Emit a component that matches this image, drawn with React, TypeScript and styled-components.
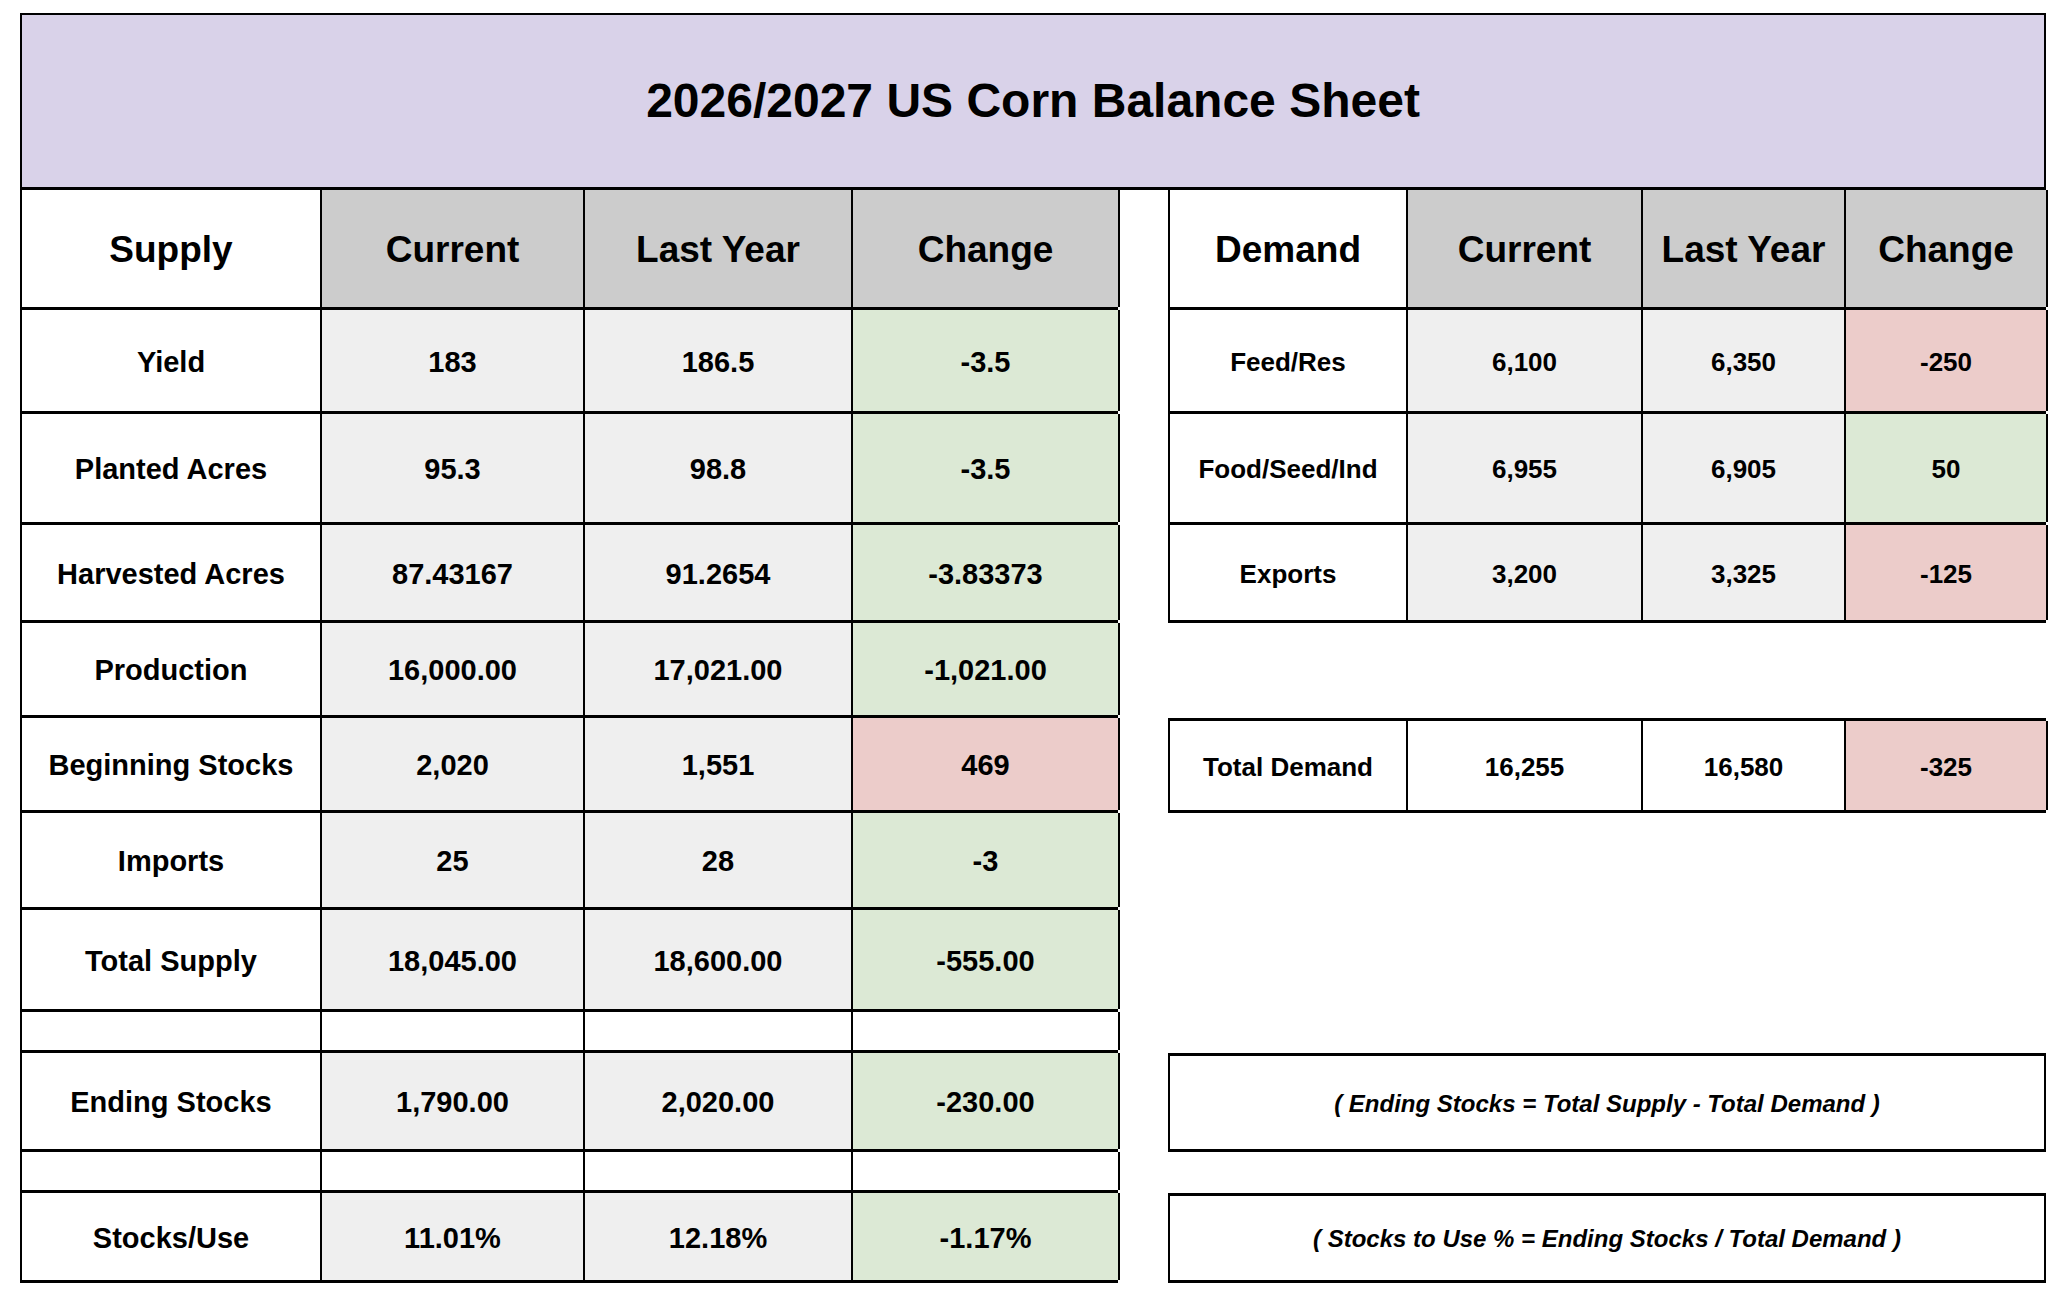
import styled, { createGlobalStyle } from "styled-components"

type Tone = "plain" | "gray" | "head" | "green" | "red"

type SupplyRow = {
  label: string
  current: string
  last: string
  change: string
  tone: Tone
  h: number
}

const tones: Record<Tone, string> = {
  plain: "#ffffff",
  gray: "#efefef",
  head: "#cccccc",
  green: "#dce9d5",
  red: "#ecccca",
}

const LEFT_COLS = "300px 263px 268px 267px"
const RIGHT_COLS = "238px 235px 203px 202px"

const supply: (SupplyRow | null)[] = [
  { label: "Yield", current: "183", last: "186.5", change: "-3.5", tone: "green", h: 104 },
  { label: "Planted Acres", current: "95.3", last: "98.8", change: "-3.5", tone: "green", h: 111 },
  { label: "Harvested Acres", current: "87.43167", last: "91.2654", change: "-3.83373", tone: "green", h: 98 },
  { label: "Production", current: "16,000.00", last: "17,021.00", change: "-1,021.00", tone: "green", h: 95 },
  { label: "Beginning Stocks", current: "2,020", last: "1,551", change: "469", tone: "red", h: 95 },
  { label: "Imports", current: "25", last: "28", change: "-3", tone: "green", h: 97 },
  { label: "Total Supply", current: "18,045.00", last: "18,600.00", change: "-555.00", tone: "green", h: 102 },
  null,
  { label: "Ending Stocks", current: "1,790.00", last: "2,020.00", change: "-230.00", tone: "green", h: 99 },
  null,
  { label: "Stocks/Use", current: "11.01%", last: "12.18%", change: "-1.17%", tone: "green", h: 90 },
]

const demand: SupplyRow[] = [
  { label: "Feed/Res", current: "6,100", last: "6,350", change: "-250", tone: "red", h: 104 },
  { label: "Food/Seed/Ind", current: "6,955", last: "6,905", change: "50", tone: "green", h: 111 },
  { label: "Exports", current: "3,200", last: "3,325", change: "-125", tone: "red", h: 98 },
]

export default function App() {
  return (
    <>
      <GlobalStyle />
      <Sheet>
        <TitleBand>2026/2027 US Corn Balance Sheet</TitleBand>
        <Body>
          {/* supply side */}
          <Table $w={1098}>
            <Row $h={120} $cols={LEFT_COLS}>
              <Cell $bg={tones.plain} $size={37}>Supply</Cell>
              <Cell $bg={tones.head} $size={37}>Current</Cell>
              <Cell $bg={tones.head} $size={37}>Last Year</Cell>
              <Cell $bg={tones.head} $size={37}>Change</Cell>
            </Row>
            {supply.map((r, i) =>
              r ? (
                <Row key={i} $h={r.h} $cols={LEFT_COLS}>
                  <Cell $bg={tones.plain} $size={29}>{r.label}</Cell>
                  <Cell $bg={tones.gray} $size={29}>{r.current}</Cell>
                  <Cell $bg={tones.gray} $size={29}>{r.last}</Cell>
                  <Cell $bg={tones[r.tone]} $size={29}>{r.change}</Cell>
                </Row>
              ) : (
                <Row key={i} $h={41} $cols={LEFT_COLS}>
                  <Cell $bg={tones.plain} $size={29} />
                  <Cell $bg={tones.plain} $size={29} />
                  <Cell $bg={tones.plain} $size={29} />
                  <Cell $bg={tones.plain} $size={29} />
                </Row>
              )
            )}
          </Table>

          {/* demand side */}
          <Column>
            <Table $w={878}>
              <Row $h={120} $cols={RIGHT_COLS}>
                <Cell $bg={tones.plain} $size={37}>Demand</Cell>
                <Cell $bg={tones.head} $size={37}>Current</Cell>
                <Cell $bg={tones.head} $size={37}>Last Year</Cell>
                <Cell $bg={tones.head} $size={37}>Change</Cell>
              </Row>
              {demand.map((r) => (
                <Row key={r.label} $h={r.h} $cols={RIGHT_COLS}>
                  <Cell $bg={tones.plain} $size={26}>{r.label}</Cell>
                  <Cell $bg={tones.gray} $size={26}>{r.current}</Cell>
                  <Cell $bg={tones.gray} $size={26}>{r.last}</Cell>
                  <Cell $bg={tones[r.tone]} $size={26}>{r.change}</Cell>
                </Row>
              ))}
            </Table>
            <Spacer $h={95} />
            <Table $w={878}>
              <Row $h={95} $cols={RIGHT_COLS} $top>
                <Cell $bg={tones.plain} $size={26}>Total Demand</Cell>
                <Cell $bg={tones.plain} $size={26}>16,255</Cell>
                <Cell $bg={tones.plain} $size={26}>16,580</Cell>
                <Cell $bg={tones.red} $size={26}>-325</Cell>
              </Row>
            </Table>
            <Spacer $h={240} />
            <Formula $h={99}>( Ending Stocks = Total Supply - Total Demand )</Formula>
            <Spacer $h={41} />
            <Formula $h={90}>( Stocks to Use % = Ending Stocks / Total Demand )</Formula>
          </Column>
        </Body>
      </Sheet>
    </>
  )
}

const GlobalStyle = createGlobalStyle`
  * { box-sizing: border-box; }
  body {
    margin: 0;
    background: #ffffff;
    font-family: "Liberation Sans", Arial, sans-serif;
    color: #000000;
  }
`

const Sheet = styled.div`
  width: 2062px;
  padding: 13px 0 0 20px;
`

const TitleBand = styled.div`
  width: 2026px;
  height: 177px;
  background: #d9d2e9;
  border: 2px solid #000;
  border-bottom-width: 3px;
  display: flex;
  align-items: center;
  justify-content: center;
  font-size: 48px;
  font-weight: 700;
  padding-bottom: 2px;
`

const Body = styled.div`
  display: flex;
  gap: 50px;
  align-items: flex-start;
`

const Column = styled.div`
  display: flex;
  flex-direction: column;
`

const Table = styled.div<{ $w: number }>`
  width: ${(p) => p.$w}px;
  border-left: 2px solid #000;
  display: flex;
  flex-direction: column;
`

const Row = styled.div<{ $h: number; $cols: string; $top?: boolean }>`
  display: grid;
  grid-template-columns: ${(p) => p.$cols};
  height: ${(p) => p.$h}px;
  border-bottom: 3px solid #000;
  border-top: ${(p) => (p.$top ? "3px solid #000" : "none")};
  margin-left: -2px;
  padding-left: 2px;
`

const Cell = styled.div<{ $bg: string; $size: number }>`
  background: ${(p) => p.$bg};
  border-right: 2px solid #000;
  display: flex;
  align-items: center;
  justify-content: center;
  padding-top: 3px;
  font-size: ${(p) => p.$size}px;
  font-weight: 700;
  white-space: nowrap;
`

const Spacer = styled.div<{ $h: number }>`
  height: ${(p) => p.$h}px;
`

const Formula = styled.div<{ $h: number }>`
  width: 878px;
  height: ${(p) => p.$h}px;
  border: 2px solid #000;
  border-top-width: 3px;
  border-bottom-width: 3px;
  display: flex;
  align-items: center;
  justify-content: center;
  padding-top: 2px;
  font-size: 24px;
  font-weight: 700;
  font-style: italic;
`
